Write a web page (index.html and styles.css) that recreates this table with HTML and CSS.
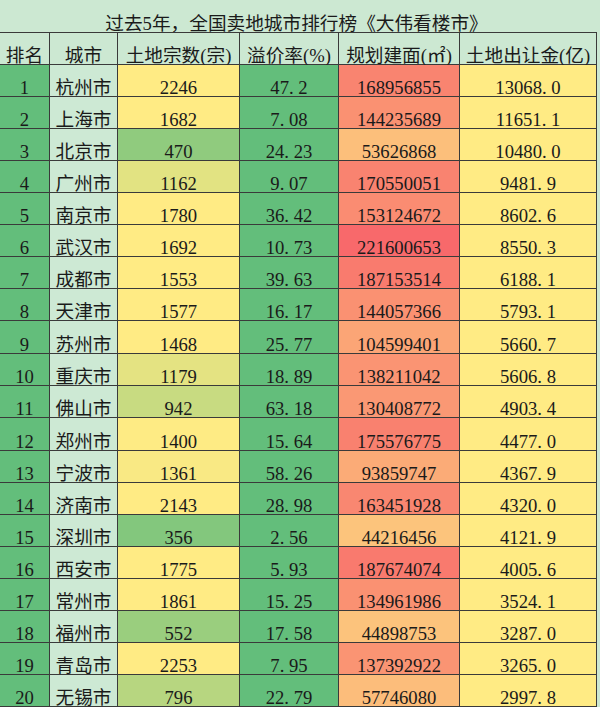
FILE: index.html
```html
<!DOCTYPE html>
<html lang="zh-CN">
<head>
<meta charset="utf-8">
<title>过去5年，全国卖地城市排行榜</title>
<link rel="stylesheet" href="styles.css">
</head>
<body>
<div class="sheet">
  <div class="title">过去5年，全国卖地城市排行榜《大伟看楼市》</div>

  <div class="cell head">排名</div>
  <div class="cell head">城市</div>
  <div class="cell head">土地宗数(宗)</div>
  <div class="cell head">溢价率(%)</div>
  <div class="cell head">规划建面(㎡)</div>
  <div class="cell head">土地出让金(亿)</div>

  <div class="cell rank">1</div><div class="cell city">杭州市</div><div class="cell num" style="background:#FFEB84">2246</div><div class="cell rate">47<span class="pt">.</span>2</div><div class="cell area" style="background:#F98470">168956855</div><div class="cell fee">13068<span class="pt">.</span>0</div>
  <div class="cell rank">2</div><div class="cell city">上海市</div><div class="cell num" style="background:#FFEB84">1682</div><div class="cell rate">7<span class="pt">.</span>08</div><div class="cell area" style="background:#FA9172">144235689</div><div class="cell fee">11651<span class="pt">.</span>1</div>
  <div class="cell rank">3</div><div class="cell city">北京市</div><div class="cell num" style="background:#90CB7E">470</div><div class="cell rate">24<span class="pt">.</span>23</div><div class="cell area" style="background:#FCBF7B">53626868</div><div class="cell fee">10480<span class="pt">.</span>0</div>
  <div class="cell rank">4</div><div class="cell city">广州市</div><div class="cell num" style="background:#E2E382">1162</div><div class="cell rate">9<span class="pt">.</span>07</div><div class="cell area" style="background:#F98370">170550051</div><div class="cell fee">9481<span class="pt">.</span>9</div>
  <div class="cell rank">5</div><div class="cell city">南京市</div><div class="cell num" style="background:#FFEB84">1780</div><div class="cell rate">36<span class="pt">.</span>42</div><div class="cell area" style="background:#FA8C72">153124672</div><div class="cell fee">8602<span class="pt">.</span>6</div>
  <div class="cell rank">6</div><div class="cell city">武汉市</div><div class="cell num" style="background:#FFEB84">1692</div><div class="cell rate">10<span class="pt">.</span>73</div><div class="cell area" style="background:#F8696B">221600653</div><div class="cell fee">8550<span class="pt">.</span>3</div>
  <div class="cell rank">7</div><div class="cell city">成都市</div><div class="cell num" style="background:#FFEB84">1553</div><div class="cell rate">39<span class="pt">.</span>63</div><div class="cell area" style="background:#F97B6E">187153514</div><div class="cell fee">6188<span class="pt">.</span>1</div>
  <div class="cell rank">8</div><div class="cell city">天津市</div><div class="cell num" style="background:#FFEB84">1577</div><div class="cell rate">16<span class="pt">.</span>17</div><div class="cell area" style="background:#FA9172">144057366</div><div class="cell fee">5793<span class="pt">.</span>1</div>
  <div class="cell rank">9</div><div class="cell city">苏州市</div><div class="cell num" style="background:#FFEB84">1468</div><div class="cell rate">25<span class="pt">.</span>77</div><div class="cell area" style="background:#FBA576">104599401</div><div class="cell fee">5660<span class="pt">.</span>7</div>
  <div class="cell rank">10</div><div class="cell city">重庆市</div><div class="cell num" style="background:#E4E382">1179</div><div class="cell rate">18<span class="pt">.</span>89</div><div class="cell area" style="background:#FA9473">138211042</div><div class="cell fee">5606<span class="pt">.</span>8</div>
  <div class="cell rank">11</div><div class="cell city">佛山市</div><div class="cell num" style="background:#C8DB81">942</div><div class="cell rate">63<span class="pt">.</span>18</div><div class="cell area" style="background:#FA9874">130408772</div><div class="cell fee">4903<span class="pt">.</span>4</div>
  <div class="cell rank">12</div><div class="cell city">郑州市</div><div class="cell num" style="background:#FEEB84">1400</div><div class="cell rate">15<span class="pt">.</span>64</div><div class="cell area" style="background:#F9816F">175576775</div><div class="cell fee">4477<span class="pt">.</span>0</div>
  <div class="cell rank">13</div><div class="cell city">宁波市</div><div class="cell num" style="background:#F9E984">1361</div><div class="cell rate">58<span class="pt">.</span>26</div><div class="cell area" style="background:#FBAB77">93859747</div><div class="cell fee">4367<span class="pt">.</span>9</div>
  <div class="cell rank">14</div><div class="cell city">济南市</div><div class="cell num" style="background:#FFEB84">2143</div><div class="cell rate">28<span class="pt">.</span>98</div><div class="cell area" style="background:#F98771">163451928</div><div class="cell fee">4320<span class="pt">.</span>0</div>
  <div class="cell rank">15</div><div class="cell city">深圳市</div><div class="cell num" style="background:#83C77D">356</div><div class="cell rate">2<span class="pt">.</span>56</div><div class="cell area" style="background:#FCC47C">44216456</div><div class="cell fee">4121<span class="pt">.</span>9</div>
  <div class="cell rank">16</div><div class="cell city">西安市</div><div class="cell num" style="background:#FFEB84">1775</div><div class="cell rate">5<span class="pt">.</span>93</div><div class="cell area" style="background:#F97A6E">187674074</div><div class="cell fee">4005<span class="pt">.</span>6</div>
  <div class="cell rank">17</div><div class="cell city">常州市</div><div class="cell num" style="background:#FFEB84">1861</div><div class="cell rate">15<span class="pt">.</span>25</div><div class="cell area" style="background:#FA9172">134961986</div><div class="cell fee">3524<span class="pt">.</span>1</div>
  <div class="cell rank">18</div><div class="cell city">福州市</div><div class="cell num" style="background:#9ACE7E">552</div><div class="cell rate">17<span class="pt">.</span>58</div><div class="cell area" style="background:#FCC37C">44898753</div><div class="cell fee">3287<span class="pt">.</span>0</div>
  <div class="cell rank">19</div><div class="cell city">青岛市</div><div class="cell num" style="background:#FFEB84">2253</div><div class="cell rate">7<span class="pt">.</span>95</div><div class="cell area" style="background:#FA9473">137392922</div><div class="cell fee">3265<span class="pt">.</span>0</div>
  <div class="cell rank">20</div><div class="cell city">无锡市</div><div class="cell num" style="background:#B7D680">796</div><div class="cell rate">22<span class="pt">.</span>79</div><div class="cell area" style="background:#FCBD7B">57746080</div><div class="cell fee">2997<span class="pt">.</span>8</div>
</div>
</body>
</html>
```

FILE: styles.css
```css
html, body {
  margin: 0;
  padding: 0;
  background: #CCE8D2;
}

body {
  font-family: "Liberation Serif", "Noto Sans CJK SC", serif;
  font-size: 18.67px;
  color: #1a1a1a;
}

.sheet {
  display: grid;
  grid-template-columns: 50px 68px 122px 99px 121px 137px;
  grid-template-rows: 33px 32px repeat(8, 32px) 33px 32px 32px 33px repeat(8, 32px);
  width: 597px;
}

.title {
  grid-column: 1 / -1;
  box-sizing: border-box;
  border-bottom: 1px solid #3a3a3a;
  display: flex;
  align-items: flex-end;
  justify-content: center;
  line-height: 17px;
  padding-right: 4px;
}

.cell {
  box-sizing: border-box;
  border-right: 1px solid #3a3a3a;
  border-bottom: 1px solid #3a3a3a;
  display: flex;
  align-items: flex-end;
  justify-content: center;
  line-height: 17px;
  white-space: nowrap;
}

.pt {
  letter-spacing: 0.25em;
}

.head {
  background: #CCE8D2;
}

.rank,
.rate {
  background: #63BE7B;
}

.city {
  background: #CDE9D4;
}

.fee {
  background: #FFEB84;
}
```
